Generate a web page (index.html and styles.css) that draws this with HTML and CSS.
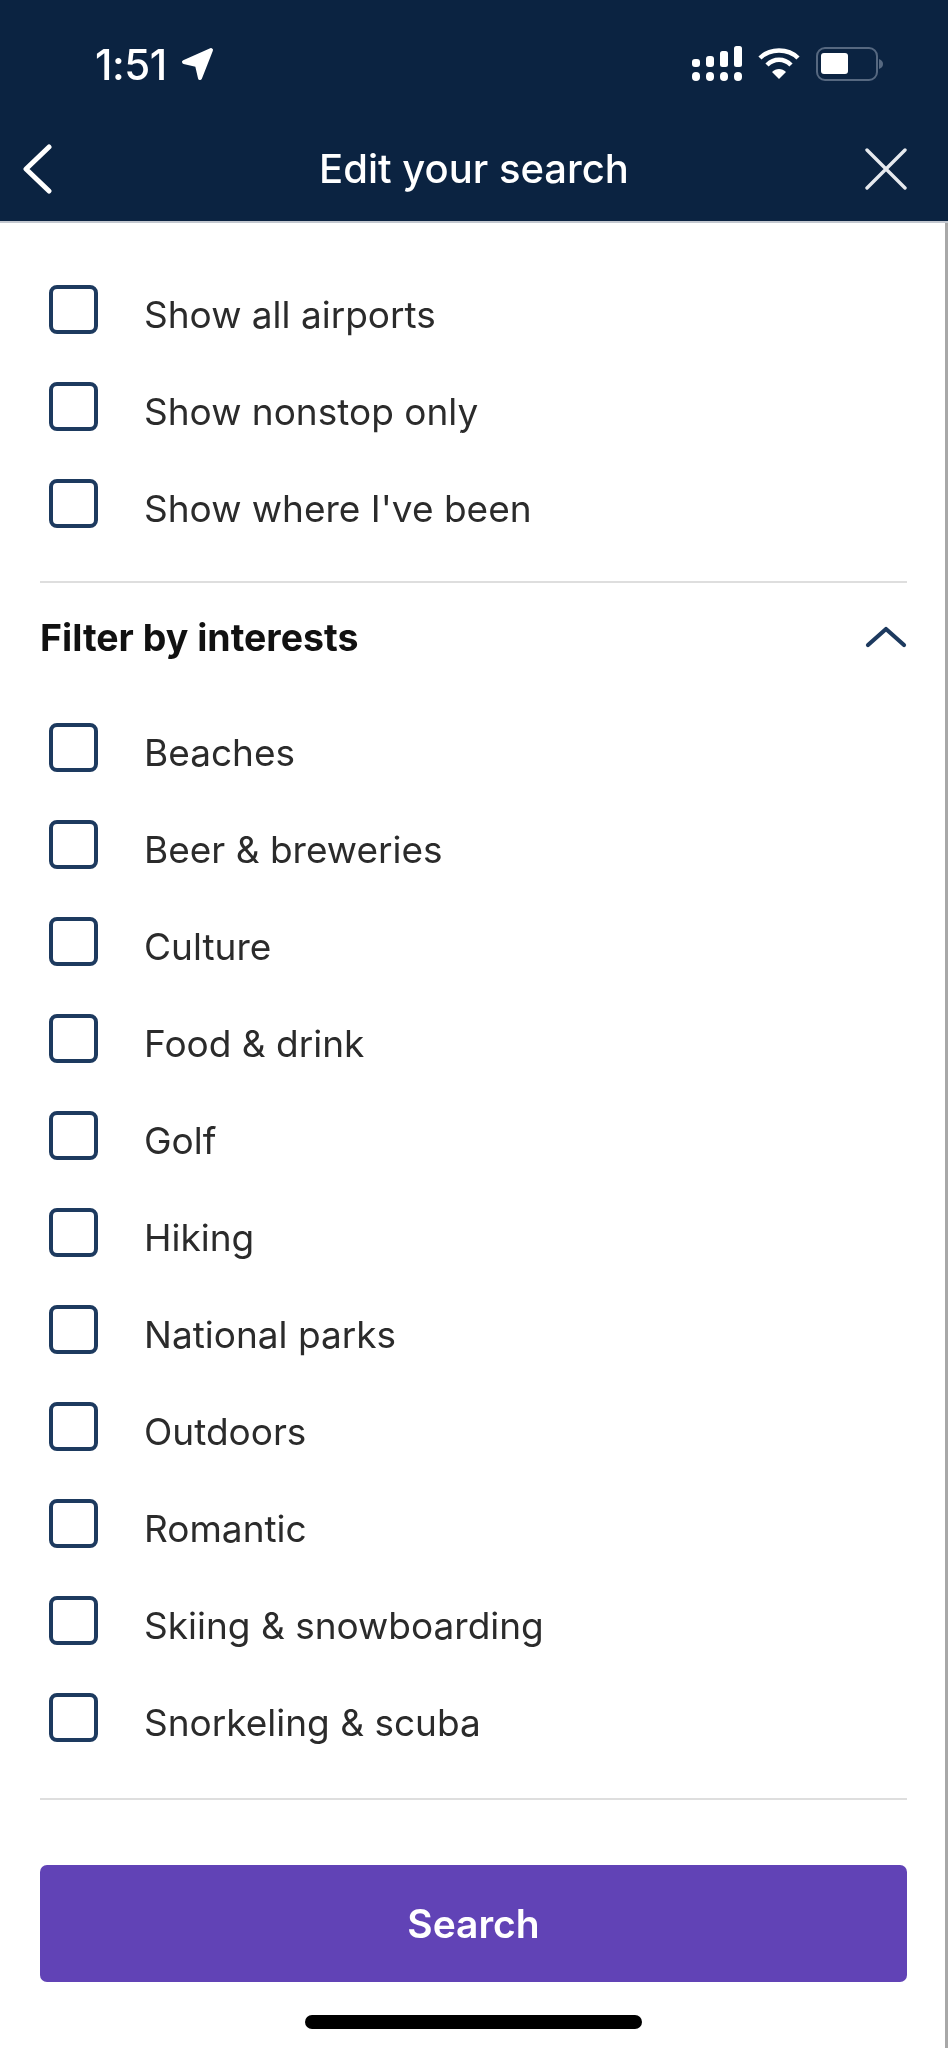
FILE: index.html
```html
<!DOCTYPE html>
<html lang='en'>
<head>
    <meta charset='UTF-8'>
    <title>Edit your search</title>
    <link rel="stylesheet" href="styles.css">
</head>
<body>
    <div class='header'>
        <div class='status'>
            <div class='status-left'>
                <span class='time'>1:51</span>
                <svg class='arrow' width='34' height='34' viewBox='0 0 34 34'><path d='M31 3 L4 15 L17 18 L20 31 Z' fill='#fff' stroke='#fff' stroke-width='4' stroke-linejoin='round'/></svg>
            </div>
            <div class='status-right'>
                <svg width='50' height='36' viewBox='0 0 50 36' fill='#fff'>
                    <rect x='0' y='13' width='8' height='8' rx='3'/><rect x='14' y='10' width='8' height='11' rx='3'/><rect x='28' y='5' width='8' height='16' rx='2.5'/><rect x='42' y='0' width='8' height='21' rx='2.5'/>
                    <rect x='0' y='26' width='8' height='9' rx='4'/><rect x='14' y='26' width='8' height='9' rx='4'/><rect x='28' y='26' width='8' height='9' rx='4'/><rect x='42' y='26' width='8' height='9' rx='4'/>
                </svg>
                <svg width='42' height='32' viewBox='0 0 42 32' fill='none' stroke='#fff' stroke-width='4.5'>
                    <path d='M2 10 C12 0 30 0 40 10'/>
                    <path d='M9 17 C16 10 26 10 33 17'/>
                    <path d='M21 31 L14 24 C18 20 24 20 28 24 Z' fill='#fff' stroke='none'/>
                </svg>
                <svg width='68' height='34' viewBox='0 0 68 34' fill='none'>
                    <rect x='1' y='1' width='60' height='32' rx='8' stroke='#566880' stroke-width='2'/>
                    <rect x='5' y='6' width='27' height='21' rx='3' fill='#fff'/>
                    <path d='M63 12 C66 13 67 15 67 17 C67 19 66 21 63 22 Z' fill='#566880'/>
                </svg>
            </div>
        </div>
        <div class='nav'>
            <svg class='nav-back' width='34' height='50' viewBox='0 0 34 50' fill='none' stroke='#fff' stroke-width='5' stroke-linecap='round' stroke-linejoin='round'><path d='M29 3 L6 25 L29 47'/></svg>
            <div class='nav-title'>Edit your search</div>
            <svg class='nav-close' width='44' height='42' viewBox='0 0 44 42' fill='none' stroke='#e6e9ee' stroke-width='3.4' stroke-linecap='round'><path d='M3 2 L41 40 M41 2 L3 40'/></svg>
        </div>
    </div>

    <div class='content'>
        <div class='list first'>
            <div class='row'><span class='box'></span><span class='label'>Show all airports</span></div>
            <div class='row'><span class='box'></span><span class='label'>Show nonstop only</span></div>
            <div class='row'><span class='box'></span><span class='label'>Show where I've been</span></div>
        </div>

        <div class='divider'></div>

        <div class='section-head'>
            <span class='section-title'>Filter by interests</span>
            <svg width='42' height='22' viewBox='0 0 42 22' fill='none' stroke='#1d3a5f' stroke-width='4.2' stroke-linecap='round' stroke-linejoin='round'><path d='M3 19 L21 3 L39 19'/></svg>
        </div>

        <div class='list'>
            <div class='row'><span class='box'></span><span class='label'>Beaches</span></div>
            <div class='row'><span class='box'></span><span class='label'>Beer &amp; breweries</span></div>
            <div class='row'><span class='box'></span><span class='label'>Culture</span></div>
            <div class='row'><span class='box'></span><span class='label'>Food &amp; drink</span></div>
            <div class='row'><span class='box'></span><span class='label'>Golf</span></div>
            <div class='row'><span class='box'></span><span class='label'>Hiking</span></div>
            <div class='row'><span class='box'></span><span class='label'>National parks</span></div>
            <div class='row'><span class='box'></span><span class='label'>Outdoors</span></div>
            <div class='row'><span class='box'></span><span class='label'>Romantic</span></div>
            <div class='row'><span class='box'></span><span class='label'>Skiing &amp; snowboarding</span></div>
            <div class='row'><span class='box'></span><span class='label'>Snorkeling &amp; scuba</span></div>
        </div>

        <div class='divider lower'></div>

        <div class='search-btn'>Search</div>
        <div class='home-bar'></div>
    </div>
</body>
</html>
```

FILE: styles.css
```css
html, body {
    padding:0px;
    margin:0px;
    background: white;
    font-family:Inter, "Liberation Sans", sans-serif;
}

body {
    filter:blur(0.6px);
}

.header {
    background: #0b2341;
    height:221px;
    border-bottom:2px solid #c3c8d0;
    color:white;
}

.status {
    height:128px;
    display:flex;
    justify-content:space-between;
    align-items:center;
    padding:0 64px 0 95px;
}

.status-left {
    display:flex;
    align-items:center;
    gap:13px;
}

.status-right {
    display:flex;
    align-items:center;
    gap:16px;
}

.time {
    font-size:42px;
    font-weight:500;
    letter-spacing:-0.5px;
}

.nav {
    height:93px;
    display:grid;
    grid-template-columns:1fr auto 1fr;
    align-items:center;
    padding:0 40px 12px 40px;
    box-sizing:border-box;
}

.nav-back {
    margin-left:-20px;
}

.nav-close {
    justify-self:end;
}

.nav-title {
    font-size:40px;
    font-weight:500;
}

.content {
    height:1825px;
    padding:0 38px 0 40px;
    border-right:3px solid #a8a8a8;
}

.first {
    padding-top:38px;
}

.row {
    height:97px;
    display:flex;
    align-items:center;
}

.box {
    width:41px;
    height:41px;
    margin-left:9px;
    border:4px solid #1d3a5f;
    border-radius:8px;
}

.label {
    margin-left:46px;
    padding-top:10px;
    font-size:37px;
    color:#2b2b2b;
}

.divider {
    height:2px;
    background: #dedede;
    margin-top:29px;
}

.divider.lower {
    margin-top:32px;
}

.section-head {
    height:60px;
    margin-top:24px;
    margin-bottom:32px;
    display:flex;
    justify-content:space-between;
    align-items:center;
}

.section-title {
    font-size:37.5px;
    font-weight:700;
    color:#111111;
}

.search-btn {
    height:117px;
    margin-top:65px;
    display:flex;
    justify-content:center;
    align-items:center;
    background: #6143b6;
    border-radius:7px;
    color:white;
    font-size:39px;
    font-weight:600;
}

.home-bar {
    width:337px;
    height:14px;
    margin:33px auto 0;
    background: black;
    border-radius:7px;
}
```
